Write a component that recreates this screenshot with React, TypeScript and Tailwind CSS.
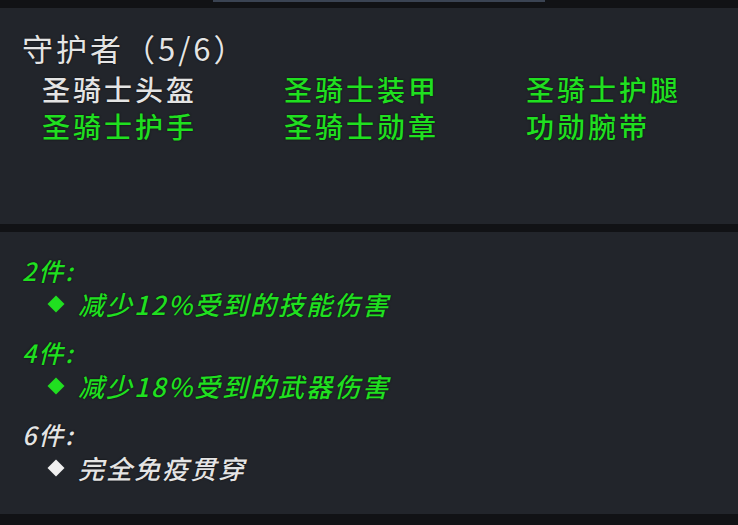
import React from "react";

type Bonus = {
  count: number;
  text: string;
  active: boolean;
};

const items = [
  { name: "圣骑士头盔", owned: false },
  { name: "圣骑士装甲", owned: true },
  { name: "圣骑士护腿", owned: true },
  { name: "圣骑士护手", owned: true },
  { name: "圣骑士勋章", owned: true },
  { name: "功勋腕带", owned: true },
];

const bonuses: Bonus[] = [
  { count: 2, text: "减少12%受到的技能伤害", active: true },
  { count: 4, text: "减少18%受到的武器伤害", active: true },
  { count: 6, text: "完全免疫贯穿", active: false },
];

const font = "font-['Noto_Sans_CJK_SC','Noto_Sans',sans-serif]";

export default function App() {
  return (
    <div className={`relative h-[525px] w-[738px] overflow-hidden bg-[#111215] pt-[8px] ${font}`}>
      {/* thin tab edge at the very top */}
      <div className="absolute left-[213px] top-0 h-[2px] w-[332px] bg-[#3a4352]" />

      <div className="flex flex-col gap-[8px]">
        {/* set pieces */}
        <div className="h-[216px] bg-[#22252b] px-[22px] pt-[20px] [text-shadow:0_0_2px_rgba(0,0,0,0.8)]">
          <h1 className="text-[31px] font-normal leading-[40px] tracking-[3px] text-[#e4e4e4]">守护者（5/6）</h1>
          <div className="mt-[3px] grid grid-cols-[242px_242px_242px] pl-[20px]">
            {items.map((it) => (
              <div
                key={it.name}
                className={`text-[28px] font-medium leading-[37px] tracking-[3px] ${it.owned ? "text-[#20df20]" : "text-[#e4e4e4]"}`}
              >
                {it.name}
              </div>
            ))}
          </div>
        </div>

        {/* set bonuses */}
        <div className="flex h-[282px] flex-col gap-[14px] bg-[#22252b] px-[22px] pt-[21px] [text-shadow:0_0_2px_rgba(0,0,0,0.8)]">
          {bonuses.map((b) => {
            const color = b.active ? "text-[#20df20]" : "text-[#e4e4e4]";
            return (
              <div key={b.count} className={`italic font-medium ${color}`}>
                <div className="text-[25px] leading-[34px] tracking-[2px]">{b.count}件:</div>
                <div className="flex items-center leading-[34px]">
                  <span className={`ml-[28px] mr-[16px] h-[12px] w-[12px] rotate-45 ${b.active ? "bg-[#20df20]" : "bg-[#f0f0f0]"}`} />
                  <span className="text-[26px] tracking-[2px]">{b.text}</span>
                </div>
              </div>
            );
          })}
        </div>
      </div>
    </div>
  );
}
